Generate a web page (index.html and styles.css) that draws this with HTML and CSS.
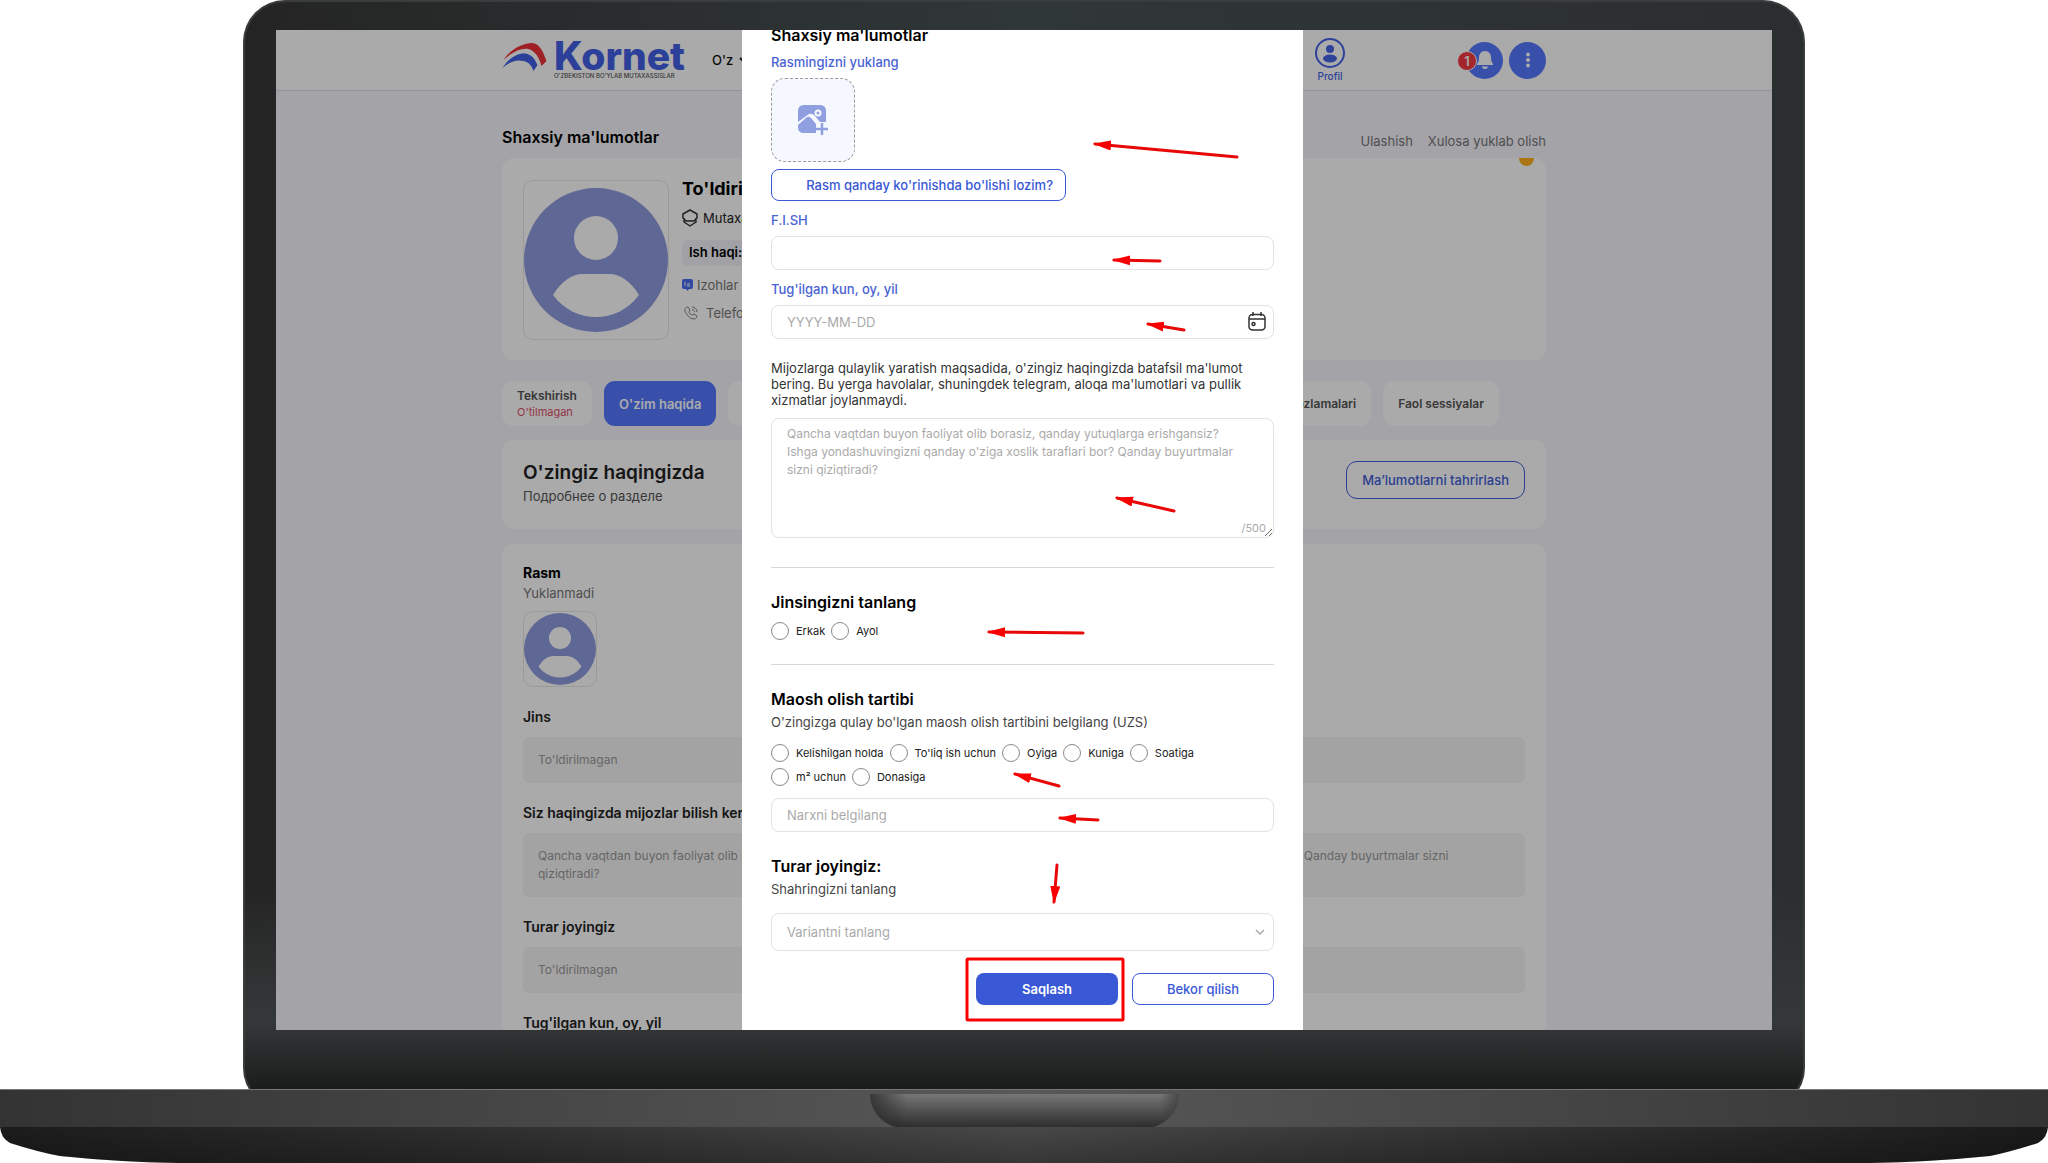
FILE: index.html
```html
<!DOCTYPE html>
<html lang="uz">
<head>
<meta charset="utf-8">
<meta name="viewport" content="width=device-width, initial-scale=1">
<title>Kornet – Shaxsiy ma'lumotlar</title>
<link rel="stylesheet" href="styles.css">
</head>
<body>
<svg class="defs" aria-hidden="true">
  <symbol id="avatar" viewBox="0 0 144 144">
    <circle cx="72" cy="72" r="72" fill="#8f9be0"/>
    <circle cx="72" cy="50" r="22" fill="#fff"/>
    <path d="M29 107C37 94 47 86 59 86H85C97 86 107 94 115 107C104 122 88 129 72 129C56 129 40 122 29 107Z" fill="#fff"/>
  </symbol>
</svg>
<div class="laptop">
  <div class="lid">
    <div class="screen">
      <div class="page">
        <header class="topbar">
          <div class="container topbar-row">
            <a class="logo" href="#">
              <svg class="logo-mark" viewBox="0 0 44 28" aria-hidden="true">
                <path d="M1 17C8 6 20 0 30 0C38 1 41 10 44 18L39 23C37 15 33 8 26 6C17 5 9 10 1 17Z" fill="#f03238"/>
                <path d="M0 25C7 14 17 9 25 11C31 13 33 18 35 22L31 28C29 22 26 19 21 18C13 16 7 19 0 25Z" fill="#4260e6"/>
              </svg>
              <span class="logo-text">
                <span class="logo-name">Kornet</span>
                <span class="logo-sub">O'ZBEKISTON BO'YLAB MUTAXASSISLAR</span>
              </span>
            </a>
            <button class="lang" type="button">O'z
              <svg width="8" height="6" viewBox="0 0 8 6" aria-hidden="true"><path d="M1 1L4 4L7 1" fill="none" stroke="#222" stroke-width="2"/></svg>
            </button>
            <nav class="topbar-nav">
              <a class="profile" href="#">
                <svg width="32" height="32" viewBox="0 0 32 32" aria-hidden="true"><circle cx="16" cy="16" r="14" fill="none" stroke="#4563e8" stroke-width="2"/><circle cx="16" cy="12" r="4" fill="#4563e8"/><ellipse cx="16" cy="21.500" rx="7" ry="4" fill="#4563e8"/></svg>
                Profil
              </a>
              <button class="round" type="button" aria-label="Bildirishnomalar">
                <svg width="20" height="20" viewBox="0 0 20 20" aria-hidden="true"><path d="M10 1C6 1 4 4 4 8C4 11 3 12 2 14V15H18V14C17 12 16 11 16 8C16 4 14 1 10 1ZM7 16.500H13C12.500 18.500 11.500 19 10 19C8.500 19 7.500 18.500 7 16.500Z" fill="#fff"/></svg>
                <span class="badge">1</span>
              </button>
              <button class="round" type="button" aria-label="Menyu">
                <svg width="20" height="20" viewBox="0 0 20 20" aria-hidden="true"><circle cx="10" cy="4.500" r="2" fill="#fff"/><circle cx="10" cy="10" r="2" fill="#fff"/><circle cx="10" cy="15.500" r="2" fill="#fff"/></svg>
              </button>
            </nav>
          </div>
        </header>

        <main class="container">
          <div class="page-head">
            <h1>Shaxsiy ma'lumotlar</h1>
            <div class="page-links"><a href="#">Ulashish</a><a href="#">Xulosa yuklab olish</a></div>
          </div>

          <section class="card person">
            <span class="ribbon"></span>
            <div class="photo"><svg viewBox="0 0 144 144"><use href="#avatar"/></svg></div>
            <div class="person-info">
              <h2>To'ldirilmagan</h2>
              <p class="line role"><svg width="16" height="18" viewBox="0 0 16 18" aria-hidden="true"><path d="M8 1L15 5V9L12 12H4L1 9V5ZM2 9V13L8 17L14 13V9" fill="none" stroke="#333" stroke-width="1.500" stroke-linejoin="round"/></svg>Mutaxassis</p>
              <p class="pay">Ish haqi:</p>
              <p class="line comments"><svg width="11" height="12" viewBox="0 0 11 12" aria-hidden="true"><path d="M2 0H9Q11 0 11 2V8Q11 10 9 10H7L5.500 12L4 10H2Q0 10 0 8V2Q0 0 2 0Z" fill="#4a6cf5"/><path d="M3 3V7M5 5H8M5 7H8" stroke="#fff"/></svg>Izohlar yo'q</p>
              <p class="line phone"><svg width="14" height="14" viewBox="0 0 14 14" aria-hidden="true"><path d="M3 1C1 2 0 4 2 7C4 11 7 13 10 13C12 13 13 11 13 10L10 8L8 9C7 9 5 7 5 6L6 4L4 1ZM8 1C11 1 13 3 13 6M8 3.500C10 4 10.500 5 10.500 6" fill="none" stroke="#888" stroke-linejoin="round"/></svg>Telefon</p>
            </div>
          </section>

          <nav class="tabs">
            <a class="tab" href="#">Tekshirish<small>O'tilmagan</small></a>
            <a class="tab active" href="#">O'zim haqida</a>
            <a class="tab wide" href="#">Sozlamalari</a>
            <a class="tab" href="#">Faol sessiyalar</a>
          </nav>

          <section class="card about">
            <div>
              <h2>O'zingiz haqingizda</h2>
              <p>Подробнее о разделе</p>
            </div>
            <button class="edit" type="button">Ma’lumotlarni tahrirlash</button>
          </section>

          <section class="card details">
            <h3 class="strong">Rasm</h3>
            <p class="muted">Yuklanmadi</p>
            <div class="thumb"><svg viewBox="0 0 144 144"><use href="#avatar"/></svg></div>
            <h3>Jins</h3>
            <p class="value">To'ldirilmagan</p>
            <h3>Siz haqingizda mijozlar bilish kerak</h3>
            <p class="value">Qancha vaqtdan buyon faoliyat olib borasiz, qanday yutuqlarga erishgansiz? Ishga yondashuvingizni qanday o'ziga xoslik taraflari bor? Qanday buyurtmalar sizni qiziqtiradi?</p>
            <h3>Turar joyingiz</h3>
            <p class="value">To'ldirilmagan</p>
            <h3>Tug'ilgan kun, oy, yil</h3>
          </section>
        </main>
      </div>

      <div class="overlay">
        <div class="modal" role="dialog" aria-label="Shaxsiy ma'lumotlar">
          <form class="form">
            <h2>Shaxsiy ma'lumotlar</h2>
            <label class="blue" for="photo">Rasmingizni yuklang</label>
            <button class="upload" id="photo" type="button" aria-label="Rasm yuklash">
              <svg width="30" height="30" viewBox="0 0 30 30" aria-hidden="true">
                <path d="M6 0H22Q28 0 28 6V17H22L17 11Q14 8 11 9L0 17V6Q0 0 6 0Z" fill="#8f9fe0"/>
                <circle cx="20" cy="8" r="2.500" fill="#8f9fe0" stroke="#f6f8ff" stroke-width="2"/>
                <path d="M0 20L9 12Q11 11 13 13L18 19V28H6Q0 28 0 22Z" fill="#8f9fe0"/>
                <path d="M24 18V30M18 24H30" stroke="#f6f8ff" stroke-width="6"/>
                <path d="M24 18V30M18 24H30" stroke="#8f9fe0" stroke-width="2.500"/>
              </svg>
            </button>
            <button class="hint" type="button">Rasm qanday ko'rinishda bo'lishi lozim?</button>
            <label class="blue name-label" for="fish">F.I.SH</label>
            <input class="field" id="fish" type="text">
            <label class="blue name-label" for="birth">Tug'ilgan kun, oy, yil</label>
            <div class="wrap">
              <input class="field" id="birth" type="text" placeholder="YYYY-MM-DD">
              <svg class="calendar" width="18" height="19" viewBox="0 0 18 19" aria-hidden="true"><rect x="1" y="2.500" width="16" height="15.500" rx="3.500" fill="none" stroke="#333" stroke-width="1.500"/><path d="M1 7H17M5 0V4M13 0V4" stroke="#333" stroke-width="1.500"/><circle cx="5.500" cy="12" r="1.500" fill="none" stroke="#333" stroke-width="1.500"/></svg>
            </div>
            <label class="note" for="about">Mijozlarga qulaylik yaratish maqsadida, o'zingiz haqingizda batafsil ma'lumot bering. Bu yerga havolalar, shuningdek telegram, aloqa ma'lumotlari va pullik xizmatlar joylanmaydi.</label>
            <div class="wrap area">
              <textarea id="about" placeholder="Qancha vaqtdan buyon faoliyat olib borasiz, qanday yutuqlarga erishgansiz? Ishga yondashuvingizni qanday o'ziga xoslik taraflari bor? Qanday buyurtmalar sizni qiziqtiradi?"></textarea>
              <span class="count">/500</span>
            </div>
            <hr>
            <h2 class="after-line">Jinsingizni tanlang</h2>
            <div class="radios">
              <label><input type="radio" name="gender">Erkak</label>
              <label><input type="radio" name="gender">Ayol</label>
            </div>
            <hr class="close">
            <h2 class="after-line">Maosh olish tartibi</h2>
            <p class="sub">O'zingizga qulay bo'lgan maosh olish tartibini belgilang (UZS)</p>
            <div class="radios">
              <label><input type="radio" name="pay">Kelishilgan holda</label>
              <label><input type="radio" name="pay">To'liq ish uchun</label>
              <label><input type="radio" name="pay">Oyiga</label>
              <label><input type="radio" name="pay">Kuniga</label>
              <label><input type="radio" name="pay">Soatiga</label>
              <label><input type="radio" name="pay">m² uchun</label>
              <label><input type="radio" name="pay">Donasiga</label>
            </div>
            <input class="field price" type="text" placeholder="Narxni belgilang" aria-label="Narxni belgilang">
            <h2 class="after-line">Turar joyingiz:</h2>
            <label class="sub" for="city">Shahringizni tanlang</label>
            <div class="wrap city">
              <select class="field" id="city"><option>Variantni tanlang</option></select>
              <svg class="chevron" width="10" height="6" viewBox="0 0 10 6" aria-hidden="true"><path d="M1 1L5 5L9 1" fill="none" stroke="#aaa" stroke-width="1.500"/></svg>
            </div>
            <div class="actions">
              <button class="save" type="submit">Saqlash</button>
              <button class="cancel" type="button">Bekor qilish</button>
            </div>
          </form>
          <svg class="marks" width="561" height="1000" viewBox="0 0 561 1000" aria-hidden="true">
            <defs><marker id="head" markerUnits="userSpaceOnUse" markerWidth="18" markerHeight="12" refX="16" refY="6" orient="auto"><path d="M0 1L18 6L0 11Z" fill="#f80000"/></marker></defs>
            <g stroke="#e80808" stroke-width="3" stroke-linecap="round" fill="none">
              <path marker-end="url(#head)" d="M495 127L353 114"/>
              <path marker-end="url(#head)" d="M418 231L372 230"/>
              <path marker-end="url(#head)" d="M442 300L406 294"/>
              <path marker-end="url(#head)" d="M432 481L375 468"/>
              <path marker-end="url(#head)" d="M341 603L247 602"/>
              <path marker-end="url(#head)" d="M317 756L273 744"/>
              <path marker-end="url(#head)" d="M356 790L318 788"/>
              <path marker-end="url(#head)" d="M315 835L312 872"/>
            </g>
            <rect x="225" y="929" width="156" height="61" rx="1" fill="none" stroke="#f80000" stroke-width="3"/>
          </svg>
        </div>
      </div>
    </div>
  </div>
  <div class="base">
    <div class="deck"><div class="notch"></div></div>
    <svg class="foot" viewBox="0 0 2048 36" preserveAspectRatio="none" aria-hidden="true">
      <defs>
        <linearGradient id="metal"><stop offset="0" stop-color="#1c1c1c"/><stop offset="0.220" stop-color="#2e2e2e"/><stop offset="0.500" stop-color="#484848"/><stop offset="0.780" stop-color="#2e2e2e"/><stop offset="1" stop-color="#1a1a1a"/></linearGradient>
        <linearGradient id="shade" x2="0" y2="1"><stop offset="0" stop-color="#000" stop-opacity="0"/><stop offset="1" stop-color="#000" stop-opacity="0.250"/></linearGradient>
      </defs>
      <path d="M0 0H2048Q2047 11 2038 16Q2010 25 1990 29Q1930 35 1870 36H178Q118 35 60 29Q38 25 10 16Q1 11 0 0Z" fill="url(#metal)"/>
      <path d="M0 0H2048Q2047 11 2038 16Q2010 25 1990 29Q1930 35 1870 36H178Q118 35 60 29Q38 25 10 16Q1 11 0 0Z" fill="url(#shade)"/>
    </svg>
  </div>
</div>
</body>
</html>
```
FILE: styles.css
```css
* { box-sizing: border-box; }

body {
  margin: 0;
  background: #fff;
  font-family: Inter, "Liberation Sans", sans-serif;
  font-size: 13px;
  line-height: 16px;
  color: #222;
}

h1, h2, h3, p { margin: 0; }
a { color: inherit; text-decoration: none; }
button, input, select, textarea { font: inherit; }
button { margin: 0; padding: 0; border: 0; background: none; }
.defs { display: none; }

/* laptop body */
.laptop { display: flex; flex-direction: column; overflow: hidden; }

.lid {
  width: 76.27%;
  margin: 0 auto -21px;
  padding: 30px 33px 80px;
  border-radius: 42px;
  background:
    linear-gradient(to bottom, transparent 80%, #353839 92%, #1b1c1c 98%),
    linear-gradient(to right, #242424, #303739 50%, #2b2e2f);
  box-shadow: inset 0 0 1px 2px #3b3e3f;
}

.screen {
  position: relative;
  aspect-ratio: 1496 / 1000;
  overflow: hidden;
  background: #f6f5fc;
}

.base { position: relative; }

.deck {
  height: 38px;
  padding-top: 4px;
  border-top: 1px solid #777;
  background: linear-gradient(to right, #333, #484848 28%, #585858 50%, #484848 72%, #333);
}

.notch {
  width: 309px;
  height: 34px;
  margin: 0 auto;
  border-radius: 0 0 36px 36px;
  background:
    linear-gradient(to right, rgba(40, 40, 40, .8), transparent 12%, transparent 94%, rgba(60, 60, 60, .8)),
    linear-gradient(#777, #505050 50%, #2c2c2c);
}

.foot { display: block; width: 100%; height: 36px; }

/* profile page */
.container { width: 100%; max-width: 1044px; margin: 0 auto; }
.topbar { height: 61px; background: #fff; border-bottom: 1px solid #dcdce6; }
.topbar-row { display: flex; align-items: center; height: 60px; }
.logo { display: flex; align-items: center; gap: 7px; }
.logo-mark { width: 45px; height: 28px; margin-bottom: 6px; }
.logo-text { display: flex; flex-direction: column; }
.logo-name { color: #4260e6; font-size: 39px; font-weight: 800; line-height: 32px; }
.logo-sub { color: #555; font-size: 6px; line-height: 8px; font-weight: 500; white-space: nowrap; }
.lang { display: flex; align-items: center; gap: 6px; margin-left: 27px; color: #111; font-weight: 500; }
.topbar-nav { display: flex; align-items: center; gap: 6px; margin-left: auto; }
.profile { display: flex; flex-direction: column; align-items: center; margin-right: 114px; color: #4563e8; font-size: 10px; line-height: 14px; font-weight: 500; }

.round {
  position: relative;
  display: grid;
  place-items: center;
  width: 37px;
  height: 37px;
  border-radius: 50%;
  background: #5478ff;
}

.badge {
  position: absolute;
  left: -9px;
  top: 9px;
  width: 20px;
  height: 20px;
  border: 1px solid #fff;
  border-radius: 50%;
  background: #f53a42;
  color: #fff;
  font-size: 13px;
  line-height: 18px;
  font-weight: 600;
}

.page-head { display: flex; justify-content: space-between; padding: 36px 0 7px; }
.page-head h1 { color: #000; font-size: 16px; line-height: 20px; font-weight: 600; }
.page-links { display: flex; gap: 15px; padding-top: 4px; color: #777; line-height: 20px; }

.card { border-radius: 12px; background: #fff; }
.person { position: relative; display: flex; gap: 13px; height: 202px; padding: 22px 21px; overflow: hidden; }
.ribbon { position: absolute; top: -7px; right: 12px; width: 15px; height: 15px; border-radius: 50%; background: #ffb01c; }
.photo { display: flex; align-items: center; width: 146px; height: 160px; border: 1px solid #e8e8e8; border-radius: 10px; }
.photo svg { width: 144px; height: 144px; }
.person-info h2 { color: #000; font-size: 18px; line-height: 18px; }
.line { display: flex; align-items: center; }
.role { gap: 5px; margin-top: 10px; height: 20px; }
.pay { margin-top: 12px; padding: 4px 7px; height: 26px; border-radius: 6px; background: #f2f2fa; color: #000; font-weight: 600; }
.comments { gap: 4px; margin-top: 11px; color: #777; height: 16px; }
.phone { gap: 8px; margin-top: 12px; padding-left: 2px; color: #777; height: 16px; }

.tabs { display: flex; gap: 12px; padding: 21px 47px 14px 0; }
.tab {
  display: flex;
  flex-direction: column;
  justify-content: center;
  height: 45px;
  padding: 0 15px;
  border-radius: 11px;
  background: #fff;
  color: #555;
  font-size: 12px;
  font-weight: 600;
}
.tab small { color: #e0506a; font-size: 11px; font-weight: 400; }
.tab.active { background: #5478ff; color: #fff; font-size: 13px; }
.tab.wide { flex: 1; align-items: flex-end; }

.about { display: flex; justify-content: space-between; align-items: flex-start; padding: 21px; height: 89px; margin-bottom: 15px; }
.about h2 { font-size: 19px; line-height: 24px; font-weight: 600; }
.about p { padding-top: 3px; color: #555; line-height: 16px; }
.edit { height: 38px; padding: 0 15px; border: 1px solid #4260d8; border-radius: 11px; color: #4260d8; font-weight: 500; }

.details { padding: 19px 21px; }
.details h3 { padding-bottom: 10px; font-size: 14px; line-height: 20px; font-weight: 600; }
.details .strong { padding: 0; color: #000; font-weight: 700; }
.muted { color: #777; line-height: 20px; }
.thumb { display: grid; place-items: center; width: 74px; height: 76px; margin: 8px 0 20px; border: 1px solid #e8e8e8; border-radius: 10px; }
.thumb svg { width: 72px; height: 72px; }
.value { margin-bottom: 20px; padding: 14px 15px; border-radius: 6px; background: #f5f5f5; color: #999; font-size: 12px; line-height: 18px; }

/* dialog */
.overlay {
  position: absolute;
  inset: 0;
  display: flex;
  justify-content: center;
  padding-right: 3px;
  background: rgba(0, 0, 0, .333);
}
.modal { position: relative; width: 561px; height: 100%; overflow: hidden; background: #fff; }
.form { display: flex; flex-direction: column; margin-top: -5px; padding: 0 29px 22px; }
.form h2 { color: #000; font-size: 16px; line-height: 20px; font-weight: 600; }
.blue { margin-top: 9px; color: #4a63d4; font-weight: 500; }
.upload {
  display: grid;
  place-items: center;
  width: 84px;
  height: 84px;
  margin-top: 8px;
  border: 1px dashed #999;
  border-radius: 14px;
  background: #f6f8ff;
}
.hint { width: 295px; height: 32px; margin-top: 7px; padding: 0 12px; border: 1px solid #3858d6; border-radius: 8px; color: #3858d6; font-weight: 500; text-align: right; }
.blue.name-label { margin-top: 11px; }
.field {
  width: 100%;
  height: 34px;
  margin-top: 8px;
  padding: 0 15px;
  border: 1px solid #e2e2e2;
  border-radius: 8px;
  background: #fff;
  color: #999;
}
::placeholder { color: #aaa; opacity: 1; }
.wrap { position: relative; }
.calendar { position: absolute; right: 8px; top: 15px; }
.note { margin-top: 21px; color: #333; }
.area { margin-top: 10px; height: 120px; }
textarea {
  display: block;
  width: 100%;
  height: 120px;
  padding: 6px 29px 6px 15px;
  border: 1px solid #e2e2e2;
  border-radius: 8px;
  font-size: 12px;
  line-height: 18px;
}
.count { position: absolute; right: 8px; bottom: 2px; color: #aaa; font-size: 11px; }
hr { width: 100%; height: 1px; margin: 29px 0 0; border: 0; background: #d8d8d8; }
hr.close { margin-top: 21px; }
.form .after-line { margin-top: 24px; }
.sub { margin-top: 5px; color: #444; }
.radios { display: flex; flex-wrap: wrap; column-gap: 6px; max-width: 450px; margin-top: 7px; font-size: 11px; }
.sub + .radios { margin-top: 11px; }
.radios label { display: flex; align-items: center; gap: 7px; height: 24px; }
.radios input { appearance: none; width: 18px; height: 18px; margin: 0; border: 1px solid #8a8a8a; border-radius: 50%; }
.price { margin-top: 9px; }
.city { margin-top: 8px; }
.city .field { display: block; height: 38px; appearance: none; color: #aaa; }
.chevron { position: absolute; right: 9px; top: 24px; }
.actions { display: flex; justify-content: flex-end; gap: 14px; margin-top: 22px; }
.actions button { width: 142px; height: 32px; border-radius: 8px; font-weight: 600; }
.actions .save { background: #3858d6; color: #fff; }
.actions .cancel { border: 1px solid #3858d6; color: #3858d6; font-weight: 500; }
.marks { position: absolute; left: 0; top: 0; pointer-events: none; }
```
